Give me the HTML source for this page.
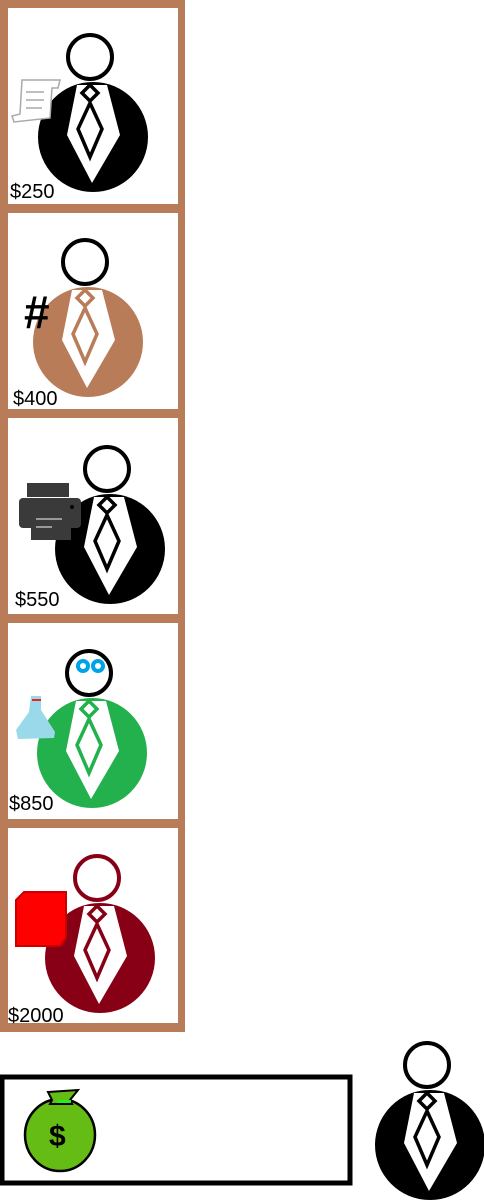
<!DOCTYPE html>
<html><head><style>
html,body{margin:0;padding:0;background:#fff;width:484px;height:1204px;overflow:hidden}
svg{position:absolute;left:0;top:0}
</style></head><body>
<svg width="484" height="1204" viewBox="0 0 484 1204" font-family="Liberation Sans, sans-serif">
<defs>
<g id="fig">
  <circle cx="0" cy="0" r="55" fill="currentColor"/>
  <polygon points="-16,-52 14,-52 27,-2 -1,46 -26,-2" fill="#fff"/>
  <polygon points="-3,-52 5,-44 -3,-36 -11,-44" fill="none" stroke="currentColor" stroke-width="3.5"/>
  <polygon points="-3,-34 9,-8 -3,20 -15,-8" fill="none" stroke="currentColor" stroke-width="3.5"/>
  <circle cx="-3" cy="-80" r="22" fill="#fff" stroke="var(--hc,#000)" stroke-width="4"/>
</g>
</defs>
<rect x="0" y="0" width="185" height="1032" fill="#b97c59"/>
<rect x="8" y="8" width="170" height="196" fill="#fff"/>
<rect x="8" y="213" width="170" height="196" fill="#fff"/>
<rect x="8" y="418" width="170" height="196" fill="#fff"/>
<rect x="8" y="623" width="170" height="196" fill="#fff"/>
<rect x="8" y="828" width="170" height="195" fill="#fff"/>

<use href="#fig" x="93" y="137" style="color:#000"/>
<g fill="#fff" stroke="#aaa" stroke-width="1.5">
<path d="M22,80 L60,80 L58,88 L52,88 L50,118 L14,122 L12,116 L20,114 Z"/>
<path d="M26,92 H44 M26,100 H44 M26,108 H42" fill="none"/>
</g>
<text x="10" y="198" font-size="20">$250</text>

<use href="#fig" x="88" y="342" style="color:#b97c59"/>
<text x="24" y="328" font-size="46" font-weight="bold">#</text>
<text x="13" y="405" font-size="20">$400</text>

<use href="#fig" x="110" y="549" style="color:#000"/>
<g fill="#3a3a3a">
<rect x="27" y="483" width="42" height="14"/>
<rect x="19" y="498" width="62" height="30" rx="4"/>
<rect x="31" y="508" width="40" height="32"/>
</g>
<rect x="36" y="518" width="26" height="2" fill="#999"/>
<rect x="36" y="526" width="16" height="2" fill="#999"/>
<circle cx="72" cy="507" r="2" fill="#000"/>
<text x="15" y="606" font-size="20">$550</text>

<use href="#fig" x="92" y="753" style="color:#22b14c"/>
<circle cx="83" cy="666" r="5" fill="none" stroke="#00a2e8" stroke-width="4"/>
<circle cx="98" cy="666" r="5" fill="none" stroke="#00a2e8" stroke-width="4"/>
<path d="M31,696 L41,696 L41,710 L55,732 L54,738 L18,739 L16,730 L29,712 Z" fill="#99d9ea"/>
<rect x="32" y="699" width="9" height="2" fill="#e22"/>
<text x="9" y="810" font-size="20">$850</text>

<use href="#fig" x="100" y="958" style="color:#880015;--hc:#880015"/>
<path d="M16,900 L24,892 L66,892 L66,938 L60,946 L16,946 Z" fill="#f00" stroke="#c00" stroke-width="2"/>
<text x="8" y="1022" font-size="20">$2000</text>

<rect x="2" y="1077" width="348" height="106" fill="#fff" stroke="#000" stroke-width="5"/>
<ellipse cx="60" cy="1135" rx="35" ry="36" fill="#65bc15" stroke="#000" stroke-width="2.5"/>
<path d="M48,1092 L78,1090 L70,1100 L72,1104 L50,1104 L52,1100 Z" fill="#65bc15" stroke="#000" stroke-width="2"/>
<rect x="57" y="1100" width="14" height="3" fill="#22ee22"/>
<text x="49" y="1146" font-size="30" font-weight="bold" fill="#000">$</text>
<use href="#fig" x="430" y="1145" style="color:#000"/>
</svg>
</body></html>
